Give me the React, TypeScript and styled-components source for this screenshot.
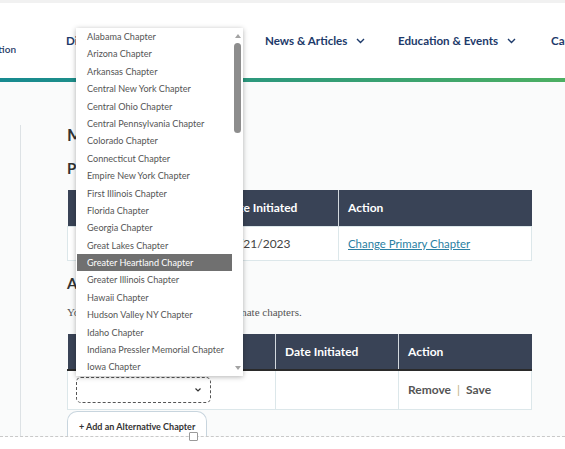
import React from "react";
import styled, { createGlobalStyle } from "styled-components";

const GlobalStyle = createGlobalStyle`
  html, body { margin: 0; padding: 0; }
  body {
    width: 565px;
    height: 449px;
    overflow: hidden;
    background: #ffffff;
    font-family: Lato, "Noto Sans", sans-serif;
    color: #333;
  }
`;

const Page = styled.div`
  position: relative;
  width: 565px;
  height: 449px;
  overflow: hidden;
  background: #fff;
`;

const TopStrip = styled.div`
  height: 3px;
  background: #f1f1f1;
`;

const Header = styled.header`
  height: 75px;
  display: flex;
  align-items: center;
  white-space: nowrap;
  overflow: hidden;
`;

const LogoClip = styled.div`
  width: 16px;
  flex: none;
  overflow: hidden;
  display: flex;
  justify-content: flex-end;
  margin-top: 16px;
  font-size: 10px;
  font-weight: 600;
  color: #1f3a66;
`;

const Nav = styled.nav`
  display: flex;
  align-items: center;
  margin-left: 50px;
  flex: none;
`;

const NavItem = styled.div<{ $w: number }>`
  display: flex;
  align-items: center;
  gap: 9px;
  width: ${(p) => p.$w}px;
  flex: none;
  font-size: 11.6px;
  font-weight: 700;
  color: #1d3a6a;
`;

const Chevron = () => (
  <svg width="9" height="6" viewBox="0 0 9 6" fill="none">
    <path d="M1 1l3.5 3.5L8 1" stroke="#1d3a6a" strokeWidth="1.4" />
  </svg>
);

const GradientBar = styled.div`
  height: 4px;
  background: linear-gradient(90deg, #178a90 0%, #2f9a7a 50%, #4caf62 100%);
`;

const Body = styled.div`
  display: flex;
  height: 354px;
  overflow: hidden;
  background: #fafbfb;
  border-bottom: 1px dashed #c9c9c9;
`;

const Sidebar = styled.aside`
  width: 20px;
  flex: none;
  margin-top: 43px;
  border-right: 1px solid #dde2e5;
`;

const Main = styled.main`
  width: 464px;
  padding: 42px 0 0 46px;
  flex: none;
`;

const Title = styled.h1`
  margin: 0;
  font-size: 17px;
  line-height: 22px;
  font-weight: 700;
  color: #333;
`;

const SubTitle = styled.h2<{ $mt: number }>`
  margin: ${(p) => p.$mt}px 0 0;
  font-size: 15px;
  line-height: 20px;
  font-weight: 700;
  color: #333;
`;

const Note = styled.p`
  margin: 12px 0 0;
  font-family: "Liberation Serif", serif;
  font-size: 11px;
  line-height: 14px;
  color: #555;
`;

const Table = styled.table<{ $mt: number }>`
  margin-top: ${(p) => p.$mt}px;
  width: 464px;
  border-collapse: collapse;
  table-layout: fixed;
`;

const Th = styled.th<{ $w: number; $dark?: boolean }>`
  width: ${(p) => p.$w}px;
  height: 36px;
  padding: 0 9px;
  box-sizing: border-box;
  background: #394356;
  color: #fff;
  font-size: 12px;
  font-weight: 700;
  text-align: left;
  border-left: 1px solid #d3d9de;
  border-bottom: ${(p) => (p.$dark ? "2px solid #2a2a2a" : "none")};
  &:first-child { border-left: none; }
`;

const Td = styled.td<{ $h: number }>`
  height: ${(p) => p.$h}px;
  padding: 0 9px;
  box-sizing: border-box;
  background: #fff;
  border: 1px solid #dce7ea;
  font-size: 12px;
  color: #444;
`;

const Link = styled.a`
  color: #2a7fa3;
  font-size: 11.4px;
  text-decoration: underline;
  cursor: pointer;
`;

const SelectBox = styled.div`
  width: 135px;
  height: 26px;
  box-sizing: border-box;
  border: 1px dashed #555;
  border-radius: 5px;
  display: flex;
  align-items: center;
  justify-content: flex-end;
  padding-right: 9px;
  margin-left: -1px;
`;

const Actions = styled.div`
  display: flex;
  align-items: center;
  gap: 6px;
  font-size: 12px;
  font-weight: 700;
  color: #555;
`;

const Sep = styled.span`
  color: #c2b07e;
  font-weight: 400;
`;

const AddButton = styled.button`
  margin-top: 1px;
  height: 30px;
  padding: 0 11px;
  background: #fff;
  border: 1px solid #c8d5de;
  border-bottom: none;
  border-radius: 10px 10px 0 0;
  font-family: Lato, "Noto Sans", sans-serif;
  font-size: 9px;
  font-weight: 700;
  color: #333;
`;

const Handle = styled.div`
  position: absolute;
  left: 189px;
  top: 432px;
  width: 7px;
  height: 7px;
  background: #fff;
  border: 1px solid #9a9a9a;
  border-radius: 1px;
`;

const Listbox = styled.div`
  position: absolute;
  left: 76px;
  top: 28px;
  width: 167px;
  height: 348px;
  background: #fff;
  box-shadow: 0 1px 5px rgba(0, 0, 0, 0.3);
  display: flex;
  overflow: hidden;
`;

const Options = styled.ul`
  list-style: none;
  margin: 0;
  padding: 0 0 0 1px;
  flex: 1;
  min-width: 0;
  overflow: hidden;
`;

const Option = styled.li<{ $active?: boolean }>`
  height: 17.4px;
  line-height: 17.4px;
  padding-left: 10px;
  font-size: 9.1px;
  color: ${(p) => (p.$active ? "#fff" : "#555")};
  background: ${(p) => (p.$active ? "#707070" : "transparent")};
  white-space: nowrap;
`;

const Scrollbar = styled.div`
  width: 11px;
  flex: none;
  display: flex;
  flex-direction: column;
  align-items: center;
`;

const Arrow = styled.div<{ $down?: boolean }>`
  width: 0;
  height: 0;
  border-left: 3.5px solid transparent;
  border-right: 3.5px solid transparent;
  ${(p) =>
    p.$down
      ? "border-top: 4px solid #a3a3a3; margin-top: auto; margin-bottom: 6px;"
      : "border-bottom: 4px solid #a3a3a3; margin-top: 6px;"}
`;

const Thumb = styled.div`
  width: 7px;
  height: 90px;
  margin-top: 5px;
  border-radius: 4px;
  background: #8d8d8d;
`;

const chapters = [
  "Alabama Chapter",
  "Arizona Chapter",
  "Arkansas Chapter",
  "Central New York Chapter",
  "Central Ohio Chapter",
  "Central Pennsylvania Chapter",
  "Colorado Chapter",
  "Connecticut Chapter",
  "Empire New York Chapter",
  "First Illinois Chapter",
  "Florida Chapter",
  "Georgia Chapter",
  "Great Lakes Chapter",
  "Greater Heartland Chapter",
  "Greater Illinois Chapter",
  "Hawaii Chapter",
  "Hudson Valley NY Chapter",
  "Idaho Chapter",
  "Indiana Pressler Memorial Chapter",
  "Iowa Chapter",
];

export default function App() {
  return (
    <Page>
      <GlobalStyle />
      <TopStrip />
      <Header>
        <LogoClip>Association</LogoClip>
        <Nav>
          <NavItem $w={199}>
            Directory <Chevron />
          </NavItem>
          <NavItem $w={133}>
            News &amp; Articles <Chevron />
          </NavItem>
          <NavItem $w={153}>
            Education &amp; Events <Chevron />
          </NavItem>
          <NavItem $w={80}>
            Careers <Chevron />
          </NavItem>
        </Nav>
      </Header>
      <GradientBar />
      <Body>
        <Sidebar />
        <Main>
          <Title>My Chapters</Title>
          <SubTitle $mt={12}>Primary Chapter</SubTitle>
          <Table $mt={12}>
            <thead>
              <tr>
                <Th $w={147}>Chapter</Th>
                <Th $w={124}>Date Initiated</Th>
                <Th $w={193}>Action</Th>
              </tr>
            </thead>
            <tbody>
              <tr>
                <Td $h={34}>Greater Heartland Chapter</Td>
                <Td $h={34}>03/21/2023</Td>
                <Td $h={34}>
                  <Link>Change Primary Chapter</Link>
                </Td>
              </tr>
            </tbody>
          </Table>
          <SubTitle $mt={12}>Alternate Chapters</SubTitle>
          <Note>You can add or remove up to three alternate chapters.</Note>
          <Table $mt={15}>
            <thead>
              <tr>
                <Th $w={208} $dark>
                  Chapter
                </Th>
                <Th $w={123} $dark>
                  Date Initiated
                </Th>
                <Th $w={133} $dark>
                  Action
                </Th>
              </tr>
            </thead>
            <tbody>
              <tr>
                <Td $h={40}>
                  <SelectBox>
                    <svg width="6" height="4" viewBox="0 0 6 4">
                      <path d="M0.5 0.5L3 3l2.5-2.5" stroke="#333" strokeWidth="1.2" fill="none" />
                    </svg>
                  </SelectBox>
                </Td>
                <Td $h={40} />
                <Td $h={40}>
                  <Actions>
                    Remove <Sep>|</Sep> Save
                  </Actions>
                </Td>
              </tr>
            </tbody>
          </Table>
          <AddButton>+ Add an Alternative Chapter</AddButton>
        </Main>
      </Body>
      <Handle />
      <Listbox>
        <Options>
          {chapters.map((c) => (
            <Option key={c} $active={c === "Greater Heartland Chapter"}>
              {c}
            </Option>
          ))}
        </Options>
        <Scrollbar>
          <Arrow />
          <Thumb />
          <Arrow $down />
        </Scrollbar>
      </Listbox>
    </Page>
  );
}
